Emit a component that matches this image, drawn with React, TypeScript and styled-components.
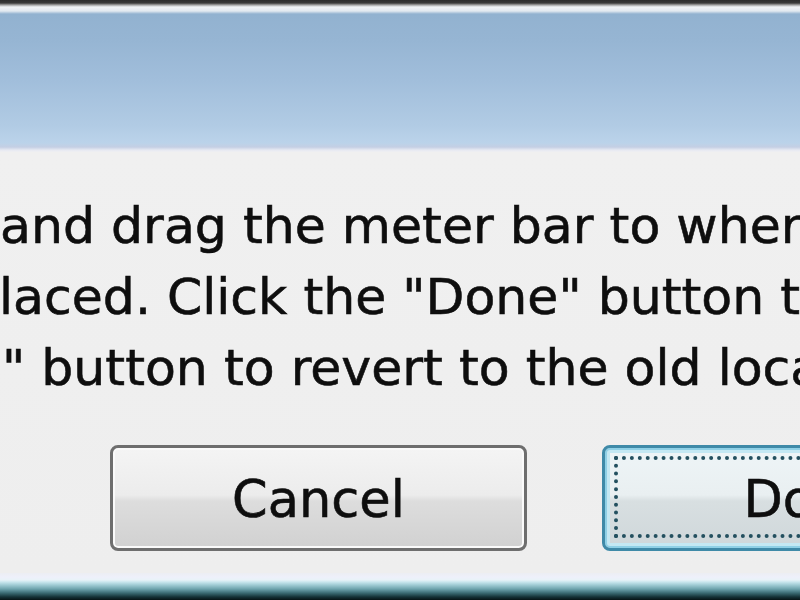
import React from "react";
import styled, { createGlobalStyle } from "styled-components";

const Global = createGlobalStyle`
  html, body { margin: 0; padding: 0; background: #f0f0f0; }
  #root { width: 800px; height: 600px; overflow: hidden; }
`;

const Window = styled.div`
  width: 800px;
  height: 600px;
  display: flex;
  flex-direction: column;
  overflow: hidden;
  font-family: "DejaVu Sans", "Noto Sans", sans-serif;
  color: #0e0e0e;
  -webkit-text-stroke: 0.6px #0e0e0e;
`;

const TitleBar = styled.div`
  height: 152px;
  flex: none;
  background: linear-gradient(
    to bottom,
    #2c2c2c 0px,
    #3a3a3a 3px,
    #a4a4a4 5px,
    #f1f4f7 7px,
    #e2e9f0 11px,
    #92b2d0 14px,
    #96b5d3 40px,
    #a1bedb 80px,
    #b1cbe4 125px,
    #bbd3ea 143px,
    #c4cfe4 147px,
    #e6e9f2 150px,
    #eff0f2 152px
  );
`;

const Body = styled.div`
  flex: 1;
  display: flex;
  flex-direction: column;
  background: linear-gradient(to bottom, #f0f0f0, #eeeeee);
  padding-top: 38px;
`;

const Message = styled.div`
  display: flex;
  flex-direction: column;
  font-size: 50.5px;
  line-height: 71px;
`;

const Line = styled.div<{ $shift: number }>`
  white-space: pre;
  margin-left: ${(p) => p.$shift}px;
`;

const ButtonRow = styled.div`
  display: flex;
  gap: 75px;
  margin-top: 42px;
  padding-left: 110px;
`;

const Button = styled.div<{ $default?: boolean }>`
  position: relative;
  flex: none;
  width: 417px;
  height: 106px;
  box-sizing: border-box;
  border-radius: 8px;
  border: 3px solid ${(p) => (p.$default ? "#3f8aa8" : "#6e6e6e")};
  background: ${(p) =>
    p.$default
      ? "linear-gradient(to bottom, #eef5f7 0%, #e9eff1 47%, #d8dfe1 53%, #cfd7da 100%)"
      : "linear-gradient(to bottom, #f4f4f4 0%, #ececec 47%, #dddddd 53%, #d1d1d1 100%)"};
  box-shadow: ${(p) =>
    p.$default
      ? "inset 0 0 0 2px #8fd0e6, inset 0 0 0 5px #c4e8f3"
      : "inset 0 0 0 2px #fafafa"};
  display: flex;
  align-items: center;
  justify-content: center;
  font-size: 51px;
  line-height: 1;
  padding-top: 2px;

  ${(p) =>
    p.$default &&
    `
    &::after {
      content: "";
      position: absolute;
      left: 9px;
      top: 8px;
      right: 9px;
      bottom: 10px;
      border: 4px dotted #24505f;
    }
  `}
`;

const BottomEdge = styled.div`
  height: 27px;
  flex: none;
  background: linear-gradient(
    to bottom,
    #eceef3 0px,
    #eef0fa 4px,
    #e8f2f8 7px,
    #c9e6ee 9px,
    #a0cbd4 12px,
    #6ea3ad 16px,
    #3b6b73 20px,
    #143136 24px,
    #071416 27px
  );
`;

export default function App() {
  return (
    <>
      <Global />
      <Window>
        <TitleBar />
        <Body>
          <Message>
            <Line $shift={0}>and drag the meter bar to where you want it</Line>
            <Line $shift={-33}>placed. Click the "Done" button to save your changes,</Line>
            <Line $shift={2}>" button to revert to the old location.</Line>
          </Message>
          <ButtonRow>
            <Button>Cancel</Button>
            <Button $default>Done</Button>
          </ButtonRow>
        </Body>
        <BottomEdge />
      </Window>
    </>
  );
}
